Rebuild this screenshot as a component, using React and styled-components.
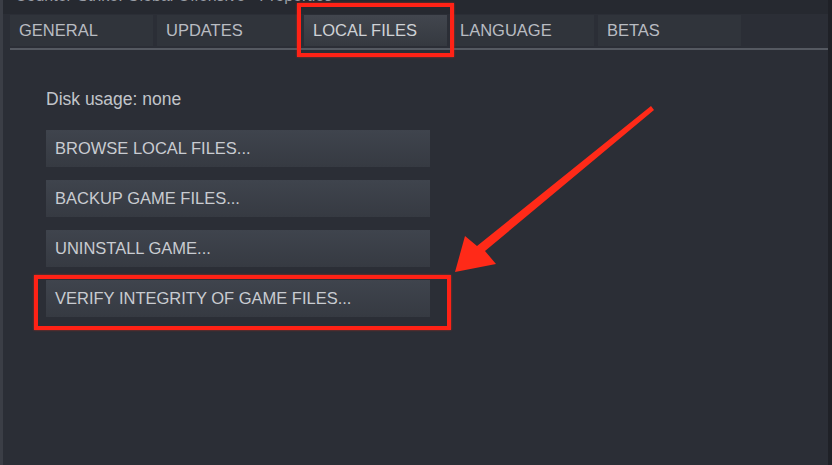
import React from "react";
import styled, { createGlobalStyle } from "styled-components";

const Global = createGlobalStyle`
  html, body { margin: 0; padding: 0; background: #2b2e36; }
  body { font-family: "Liberation Sans", Arial, sans-serif; }
`;

const Frame = styled.div`
  position: relative;
  width: 832px;
  height: 465px;
  box-sizing: border-box;
  background: #2b2e36;
  border-left: 3px solid #3b3e46;
  border-right: 4px solid #1f2127;
  overflow: hidden;
  font-family: "Liberation Sans", Arial, sans-serif;
`;

const TitleBar = styled.div`
  height: 14px;
  overflow: hidden;
  background: #262930;
  padding-left: 12px;
`;

const TitleText = styled.div`
  margin-top: -12px;
  font-size: 16px;
  line-height: 16px;
  color: #9a9ea6;
  white-space: nowrap;
`;

const TabBar = styled.div`
  display: flex;
  gap: 4px;
  margin: 1px 0 0 7px;
  height: 31px;
`;

const Tab = styled.div`
  width: 143px;
  box-sizing: border-box;
  padding-left: 9px;
  display: flex;
  align-items: center;
  font-size: 16.5px;
  color: ${(p) => (p.$active ? "#cfd2d6" : "#b9bcc2")};
  background: ${(p) =>
    p.$active ? "linear-gradient(#42464e, #353940)" : "#30343b"};
`;

const Divider = styled.div`
  margin: 2px 0 0 7px;
  height: 2px;
  background: #555961;
`;

const Content = styled.div`
  padding: 40px 0 0 43px;
  display: flex;
  flex-direction: column;
`;

const DiskUsage = styled.div`
  font-size: 17.5px;
  line-height: 19px;
  color: #c2c5ca;
  margin-bottom: 21px;
`;

const Buttons = styled.div`
  display: flex;
  flex-direction: column;
  gap: 13px;
`;

const Button = styled.div`
  width: 384px;
  height: 37px;
  box-sizing: border-box;
  padding-left: 9px;
  display: flex;
  align-items: center;
  font-size: 16.5px;
  color: #c9ccd1;
  background: linear-gradient(#3f444d, #363a42);
`;

const Highlight = styled.div`
  position: absolute;
  box-sizing: border-box;
  border: 4px solid #ff2216;
  box-shadow: 0 0 2px rgba(255, 40, 20, 0.6);
  pointer-events: none;
`;

const ArrowSvg = styled.svg`
  position: absolute;
  left: 0;
  top: 0;
  pointer-events: none;
`;

export default function App() {
  return (
    <>
      <Global />
      <Frame>
        <TitleBar>
          <TitleText>Counter-Strike: Global Offensive - Properties</TitleText>
        </TitleBar>
        <TabBar>
          <Tab>GENERAL</Tab>
          <Tab>UPDATES</Tab>
          <Tab $active>LOCAL FILES</Tab>
          <Tab>LANGUAGE</Tab>
          <Tab>BETAS</Tab>
        </TabBar>
        <Divider />
        <Content>
          <DiskUsage>Disk usage: none</DiskUsage>
          <Buttons>
            <Button>BROWSE LOCAL FILES...</Button>
            <Button>BACKUP GAME FILES...</Button>
            <Button>UNINSTALL GAME...</Button>
            <Button>VERIFY INTEGRITY OF GAME FILES...</Button>
          </Buttons>
        </Content>
        <Highlight style={{ left: 294, top: 3, width: 157, height: 54 }} />
        <Highlight style={{ left: 31, top: 275, width: 417, height: 55 }} />
        <ArrowSvg width="832" height="465" viewBox="0 0 832 465">
          <polygon
            fill="#ff2a18"
            points="648,106 651,110 482,251 493,264 452,272 462,236 474,246"
          />
        </ArrowSvg>
      </Frame>
    </>
  );
}
